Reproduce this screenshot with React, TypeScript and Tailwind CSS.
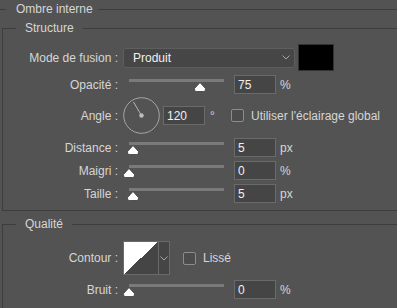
import type { ReactNode } from "react"

const TRACK = 95

function Thumb({ frac }: { frac: number }) {
  return (
    <svg
      className="absolute top-[7px]"
      style={{ left: -6 + frac * TRACK }}
      width="12"
      height="10"
      viewBox="0 0 12 10"
    >
      <path
        d="M6 0.6 L11.4 6.4 L11.4 8 Q11.4 9.5 9.9 9.5 L2.1 9.5 Q0.6 9.5 0.6 8 L0.6 6.4 Z"
        fill="#ffffff"
        stroke="#3a3a3a"
        strokeWidth="0.8"
      />
    </svg>
  )
}

function Label({ children }: { children: ReactNode }) {
  return <div className="w-[115px] shrink-0 text-right">{children}</div>
}

function NumBox({ value }: { value: string }) {
  return (
    <div className="flex h-[19px] w-[42px] shrink-0 items-center border border-[#6a6a6a] bg-[#454545] pl-[3px] text-[#f0f0f0]">
      {value}
    </div>
  )
}

function SliderRow({ label, frac, value, unit }: { label: string; frac: number; value: string; unit: string }) {
  return (
    <div className="flex h-[19px] items-center">
      <Label>{label}</Label>
      <div className="relative ml-[11px] h-[19px] w-[95px] shrink-0">
        <div className="mt-[4px] h-[3px] w-full bg-[#7a7a7a]" />
        <Thumb frac={frac} />
      </div>
      <div className="ml-[10px]">
        <NumBox value={value} />
      </div>
      <span className="ml-[4px]">{unit}</span>
    </div>
  )
}

function Check() {
  return <div className="h-[13px] w-[13px] shrink-0 rounded-[2px] border border-[#8c8c8c] bg-[#4c4c4c]" />
}

function Chevron() {
  return (
    <svg width="8" height="5" viewBox="0 0 8 5">
      <path d="M0.5 0.5 L4 4 L7.5 0.5" fill="none" stroke="#a8a8a8" strokeWidth="1" />
    </svg>
  )
}

export default function App() {
  return (
    <div className="h-[308px] w-[397px] overflow-hidden bg-[#535353] font-['Liberation_Sans',Arial,sans-serif] text-[12px] text-[#d6d6d6]">
      <fieldset className="w-[460px] border-0 border-t border-[#3d3d3d]">
        <legend className="ml-[6px] pl-[10px] pr-[5px] leading-[18px]">Ombre interne</legend>

        <fieldset className="ml-[2px] mt-[1px] w-[440px] border border-[#3d3d3d] pb-[7px] pt-[7px]">
          <legend className="ml-[13px] px-[9px] leading-[18px]">Structure</legend>

          <div className="flex h-[27px] items-center">
            <Label>Mode de fusion :</Label>
            <div className="ml-[5px] flex h-[20px] w-[172px] items-center justify-between rounded-[3px] border border-[#5e5e5e] bg-[#464646] pl-[9px] pr-[4px] text-[#f0f0f0]">
              <span>Produit</span>
              <Chevron />
            </div>
            <div className="ml-[3px] h-[27px] w-[36px] border border-[#333333] bg-black" />
          </div>

          <div className="mt-[4px]">
            <SliderRow label="Opacité :" frac={0.75} value="75" unit="%" />
          </div>

          <div className="mt-[3px] flex h-[37px] items-center">
            <Label>Angle :</Label>
            <svg className="ml-[5px] shrink-0" width="37" height="37" viewBox="0 0 37 37">
              <circle cx="18.5" cy="18.5" r="17.8" fill="none" stroke="#a6a6a6" strokeWidth="1" />
              <line x1="18.5" y1="18.5" x2="10.5" y2="5" stroke="#b8b8b8" strokeWidth="1" />
              <circle cx="18.5" cy="18.5" r="2.2" fill="#bdbdbd" />
            </svg>
            <div className="ml-[3px]">
              <NumBox value="120" />
            </div>
            <span className="ml-[5px] w-[21px] shrink-0">°</span>
            <Check />
            <span className="ml-[7px] whitespace-nowrap">Utiliser l'éclairage global</span>
          </div>

          <div className="mt-[4px] flex flex-col gap-[4px]">
            <SliderRow label="Distance :" frac={0.04} value="5" unit="px" />
            <SliderRow label="Maigri :" frac={0} value="0" unit="%" />
            <SliderRow label="Taille :" frac={0.04} value="5" unit="px" />
          </div>
        </fieldset>

        <fieldset className="ml-[2px] mt-[4px] w-[440px] border border-[#3d3d3d] pb-[20px] pt-[8px]">
          <legend className="ml-[13px] px-[9px] leading-[18px]">Qualité</legend>

          <div className="flex h-[34px] items-center">
            <Label>Contour :</Label>
            <div className="ml-[5px] flex h-[34px] w-[47px] shrink-0 border border-[#6a6a6a] bg-[#454545]">
              <svg width="34" height="32" viewBox="0 0 34 32" shapeRendering="crispEdges">
                <rect width="34" height="32" fill="#454545" />
                <polygon points="0,0 34,0 0,32" fill="#ffffff" />
              </svg>
              <div className="flex flex-1 items-center justify-center border-l border-[#6a6a6a]">
                <Chevron />
              </div>
            </div>
            <div className="ml-[13px]">
              <Check />
            </div>
            <span className="ml-[7px]">Lissé</span>
          </div>

          <div className="mt-[5px]">
            <SliderRow label="Bruit :" frac={0} value="0" unit="%" />
          </div>
        </fieldset>
      </fieldset>
    </div>
  )
}
